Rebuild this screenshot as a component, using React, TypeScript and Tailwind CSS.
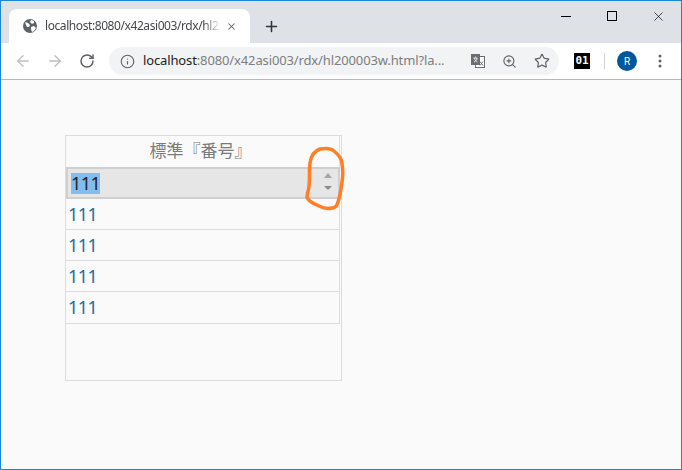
import { ArrowLeft, ArrowRight, RotateCw, Info, ZoomIn, Star, X, Plus } from "lucide-react";

const rows = ["h-[31px]", "h-[31px]", "h-[31px]", "h-[32px]"];

export default function App() {
  return (
    <div className="w-[682px] h-[470px] overflow-hidden bg-[#fafafa] border border-[#1a87d8] flex flex-col font-['Roboto',sans-serif]">
      {/* tab strip */}
      <div className="h-[42px] shrink-0 bg-[#dee1e6] flex items-end relative">
        <div className="ml-[8px] w-[241px] h-[34px] bg-white rounded-t-[8px] flex items-center pl-[13px] pr-[12px]">
          <svg width="16" height="16" viewBox="0 0 16 16" className="shrink-0">
            <circle cx="8" cy="8" r="7" fill="#5f6368" />
            <path d="M3 4l3 1 2 2-1 2-2 0-1-2zM9 2l3 1 0 2-2 1-2-2zM9 9l3-1 2 2-2 3-2 1-1-3z" fill="#fff" />
          </svg>
          <span className="ml-[7px] w-[176px] overflow-hidden whitespace-nowrap text-[12px] text-[#45474a] font-['Noto_Sans',sans-serif] tracking-[-0.035em] [mask-image:linear-gradient(to_right,black_90%,transparent)]">localhost:8080/x42asi003/rdx/hl2</span>
          <X size={11} strokeWidth={2.2} className="text-[#5f6368] ml-[5px] shrink-0" />
        </div>
        <Plus size={17} strokeWidth={2.2} className="text-[#303437] ml-[13px] mb-[8px]" />
        <div className="ml-auto self-start flex items-center text-black">
          <div className="w-[46px] h-[30px] flex items-center justify-center"><div className="w-[10px] h-px bg-black" /></div>
          <div className="w-[46px] h-[30px] flex items-center justify-center"><div className="w-[10px] h-[10px] border border-black" /></div>
          <div className="w-[46px] h-[30px] flex items-center justify-center"><X size={15} strokeWidth={1.1} /></div>
        </div>
      </div>
      {/* toolbar */}
      <div className="h-[37px] shrink-0 bg-white border-b border-[#b6b8bb] flex items-center pl-[13px]">
        <ArrowLeft size={18} strokeWidth={1.8} className="text-[#bcbec1]" />
        <ArrowRight size={18} strokeWidth={1.8} className="text-[#bcbec1] ml-[14px]" />
        <RotateCw size={16} strokeWidth={2.2} className="text-[#5b5e62] ml-[15px]" />
        <div className="ml-[14px] w-[450px] h-[28px] rounded-full bg-[#f1f3f4] flex items-center pl-[11px]">
          <Info size={15} strokeWidth={1.8} className="text-[#5f6368] shrink-0" />
          <span className="ml-[8px] w-[312px] overflow-hidden whitespace-nowrap text-[13px] text-[#7b7e82] font-['Noto_Sans',sans-serif] tracking-[-0.01em]"><span className="text-[#222]">localhost</span>:8080/x42asi003/rdx/hl200003w.html?la...</span>
          <svg width="16" height="16" viewBox="0 0 16 16" className="ml-[15px] shrink-0">
            <rect x="5.5" y="3.5" width="9" height="11" fill="#fff" stroke="#6a6d71" />
            <rect x="1" y="1" width="9" height="11" fill="#6a6d71" />
            <path d="M3.500 5h4M5.500 3.500v1M4 9c2-1 3-2 3-4M4 5c1 2 2 3 3.500 4" stroke="#fff" strokeWidth="0.8" fill="none" />
            <path d="M10 8.500l3 4M13 8.500l-3 4" stroke="#6a6d71" fill="none" />
          </svg>
          <ZoomIn size={15} strokeWidth={1.8} className="text-[#5f6368] ml-[16px] shrink-0" />
          <Star size={16} strokeWidth={1.8} className="text-[#5f6368] ml-[17px] shrink-0" />
        </div>
        <div className="ml-[15px] w-[16px] h-[16px] bg-black text-white text-[11px] leading-[16px] font-bold text-center font-['DejaVu_Sans_Mono',monospace] tracking-[-0.02em]">01</div>
        <div className="ml-[14px] w-px h-[16px] bg-[#d0d2d5]" />
        <div className="ml-[12px] w-[20px] h-[20px] rounded-full bg-[#01579b] text-white text-[10px] flex items-center justify-center">R</div>
        <svg width="4" height="14" viewBox="0 0 4 14" className="ml-[21px]">
          <circle cx="2" cy="2" r="1.500" fill="#5f6368" />
          <circle cx="2" cy="7" r="1.500" fill="#5f6368" />
          <circle cx="2" cy="12" r="1.500" fill="#5f6368" />
        </svg>
      </div>
      {/* page */}
      <div className="flex-1 pl-[64px] pt-[55px] relative">
        <div className="w-[277px] h-[246px] border border-[#dcdcdc] flex flex-col">
          <div className="w-[274px] border-r border-[#dedede] flex flex-col">
            <div className="h-[31px] flex items-center justify-center pr-[4px] pb-[3px] text-[17px] text-[#7b7b7b] font-['Noto_Sans_CJK_JP',sans-serif]">標準『番号』</div>
            <div className="h-[32px] bg-[#e6e6e6] border-2 border-[#cfcfcf] -mr-[1px] flex items-center pl-[3px] text-[18px] tracking-[-0.6px] text-[#222] relative font-['Noto_Sans',sans-serif]">
              <span className="bg-[#83bdf0] w-[29px] h-[21px] leading-[21px]">111</span>
              <svg width="8" height="17" viewBox="0 0 8 17" className="absolute right-[6px] top-[4px]">
                <path d="M0 5l4-5 4 5z" fill="#a5a5a5" />
                <path d="M0 13l4 4 4-4z" fill="#8a8a8a" />
              </svg>
            </div>
            {rows.map((h, i) => (
              <div key={i} className={`${h} border-b border-[#dcdcdc] flex items-center pl-[2px] text-[18px] tracking-[-0.6px] text-[#1f6f9c] font-['Noto_Sans',sans-serif]`}>111</div>
            ))}
          </div>
        </div>
        <svg width="44" height="70" viewBox="0 0 44 70" className="absolute left-[303px] top-[66px] pointer-events-none">
          <path d="M16 3 C 22 2, 27 2, 30 5 C 35 9, 38 13, 38 18 C 39 24, 39 30, 38 36 C 37 44, 36 50, 34 56 C 33 60, 31 62, 28 62 C 24 63, 19 62, 15 60 C 10 58, 4 55, 3 51 C 3 47, 5 44, 5 40 C 6 32, 5 24, 6 17 C 7 10, 10 5, 16 3 Z" fill="none" stroke="#ff7f27" strokeWidth="3.500" strokeLinejoin="round" />
        </svg>
      </div>
    </div>
  );
}
